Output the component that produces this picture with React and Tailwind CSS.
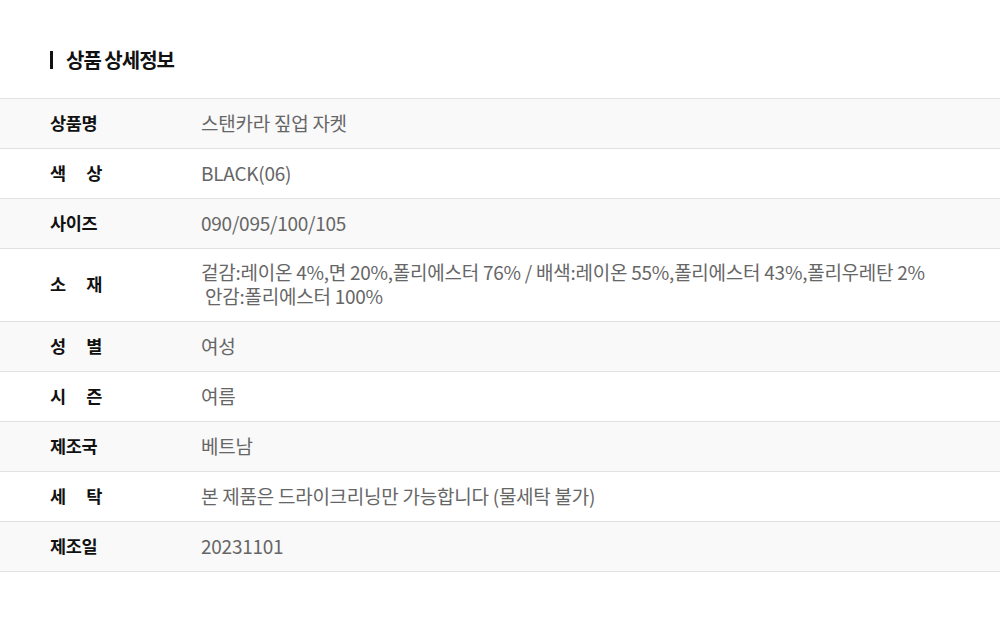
const rows = [
  { label: ['상품명'], value: ['스탠카라 짚업 자켓'] },
  { label: ['색', '상'], value: ['BLACK(06)'] },
  { label: ['사이즈'], value: ['090/095/100/105'] },
  {
    label: ['소', '재'],
    value: [
      '겉감:레이온 4%,면 20%,폴리에스터 76% / 배색:레이온 55%,폴리에스터 43%,폴리우레탄 2%',
      '\u00a0안감:폴리에스터 100%',
    ],
  },
  { label: ['성', '별'], value: ['여성'] },
  { label: ['시', '즌'], value: ['여름'] },
  { label: ['제조국'], value: ['베트남'] },
  { label: ['세', '탁'], value: ['본 제품은 드라이크리닝만 가능합니다 (물세탁 불가)'] },
  { label: ['제조일'], value: ['20231101'] },
];

function InfoRow({ label, value, shaded }) {
  return (
    <div className={`flex min-h-[50px] items-center border-b border-[#e2e2e2] pt-[11px] pb-[13px] ${shaded ? 'bg-[#f9f9f9]' : 'bg-white'}`}>
      <div className="w-[201px] shrink-0 pl-[50px]">
        <div className="flex w-[52px] justify-between text-[17.5px] font-bold leading-[24px] tracking-[-0.3px] text-[#111]">
          {label.map((ch) => (
            <span key={ch}>{ch}</span>
          ))}
        </div>
      </div>
      <div className="text-[19px] leading-[24px] tracking-[-0.25px] text-[#666]">
        {value.map((line) => (
          <div key={line} className="whitespace-pre">{line}</div>
        ))}
      </div>
    </div>
  );
}

export default function App() {
  return (
    <div className="min-h-[621px] w-[1000px] bg-white pt-[50px] font-['Noto_Sans_CJK_KR','Noto_Sans',sans-serif]">
      <div className="flex items-center pl-[50px]">
        <span className="mr-[13px] h-[18px] w-[3px] bg-[#111]" />
        <h2 className="text-[20px] font-bold leading-[20px] tracking-[-1px] text-[#111]">상품 상세정보</h2>
      </div>
      <div className="mt-[28px] border-t border-[#e2e2e2]">
        {rows.map((row, i) => (
          <InfoRow key={row.label.join('')} {...row} shaded={i % 2 === 0} />
        ))}
      </div>
    </div>
  );
}
